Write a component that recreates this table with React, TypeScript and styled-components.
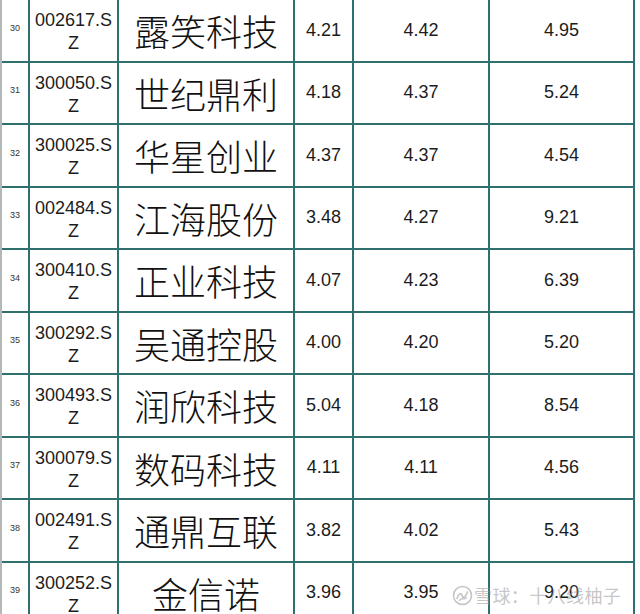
import React from "react";
import styled, { createGlobalStyle } from "styled-components";

type StockRow = {
  index: number;
  code: string;
  name: string;
  a: string;
  b: string;
  c: string;
};

const rows: StockRow[] = [
  { index: 30, code: "002617.SZ", name: "露笑科技", a: "4.21", b: "4.42", c: "4.95" },
  { index: 31, code: "300050.SZ", name: "世纪鼎利", a: "4.18", b: "4.37", c: "5.24" },
  { index: 32, code: "300025.SZ", name: "华星创业", a: "4.37", b: "4.37", c: "4.54" },
  { index: 33, code: "002484.SZ", name: "江海股份", a: "3.48", b: "4.27", c: "9.21" },
  { index: 34, code: "300410.SZ", name: "正业科技", a: "4.07", b: "4.23", c: "6.39" },
  { index: 35, code: "300292.SZ", name: "吴通控股", a: "4.00", b: "4.20", c: "5.20" },
  { index: 36, code: "300493.SZ", name: "润欣科技", a: "5.04", b: "4.18", c: "8.54" },
  { index: 37, code: "300079.SZ", name: "数码科技", a: "4.11", b: "4.11", c: "4.56" },
  { index: 38, code: "002491.SZ", name: "通鼎互联", a: "3.82", b: "4.02", c: "5.43" },
  { index: 39, code: "300252.SZ", name: "金信诺", a: "3.96", b: "3.95", c: "9.20" },
];

const GlobalStyle = createGlobalStyle`
  html, body {
    margin: 0;
    padding: 0;
    background: #fcfefe;
    overflow: hidden;
  }
  body {
    font-family: "Liberation Sans", Arial, sans-serif;
    color: #1c1c1c;
  }
`;

const Page = styled.div`
  position: relative;
  width: 640px;
  height: 614px;
  overflow: hidden;
`;

const Sheet = styled.div`
  display: grid;
  grid-template-columns: 26px 87px 174px 57px 134px 143px;
  grid-auto-rows: 60.5px;
  gap: 2px;
  width: max-content;
  margin-top: -2px;
  padding: 2px 2px 2px 0;
  background: #2e6f6f;
  border-left: 2px solid #b4b8b8;
`;

const Cell = styled.div`
  display: flex;
  align-items: center;
  justify-content: center;
  text-align: center;
  background: #ffffff;
`;

const IndexCell = styled(Cell)`
  font-size: 9px;
  color: #333;
  padding-bottom: 5px;
`;

const CodeCell = styled(Cell)`
  font-size: 18px;
  line-height: 23px;
  padding: 4px 4px 0;
  word-break: break-all;
`;

const NameCell = styled(Cell)`
  font-family: "Noto Sans CJK SC", sans-serif;
  font-weight: 300;
  font-size: 36px;
  letter-spacing: 0;
  color: #111;
`;

const ValueCell = styled(Cell)`
  font-size: 18px;
`;

const Watermark = styled.div`
  position: absolute;
  left: 452px;
  top: 582px;
  display: flex;
  align-items: center;
  gap: 1px;
  color: rgba(150, 150, 150, 0.55);
  font-family: "Noto Sans CJK SC", sans-serif;
  font-size: 18px;
  letter-spacing: 0.4px;
  pointer-events: none;
`;

const Logo = () => (
  <svg width="21" height="21" viewBox="0 0 21 21" fill="none">
    <circle cx="10.5" cy="10.5" r="9" stroke="rgba(150,150,150,0.55)" strokeWidth="1.6" />
    <path
      d="M5 13.5 C6.5 8.5 9.5 7.5 10 10.5 C10.5 13.5 13.5 12.5 15.5 7"
      stroke="rgba(150,150,150,0.55)"
      strokeWidth="1.6"
      strokeLinecap="round"
    />
    <path
      d="M7.5 15.5 C9 12 12.5 15.5 14.5 12.5"
      stroke="rgba(150,150,150,0.55)"
      strokeWidth="1.4"
      strokeLinecap="round"
    />
  </svg>
);

export default function App() {
  return (
    <Page>
      <GlobalStyle />
      <Sheet>
        {rows.map((r) => (
          <React.Fragment key={r.index}>
            <IndexCell>{r.index}</IndexCell>
            <CodeCell>{r.code}</CodeCell>
            <NameCell>{r.name}</NameCell>
            <ValueCell>{r.a}</ValueCell>
            <ValueCell>{r.b}</ValueCell>
            <ValueCell>{r.c}</ValueCell>
          </React.Fragment>
        ))}
      </Sheet>
      <Watermark>
        <Logo />
        <span>雪球：十八线柚子</span>
      </Watermark>
    </Page>
  );
}
